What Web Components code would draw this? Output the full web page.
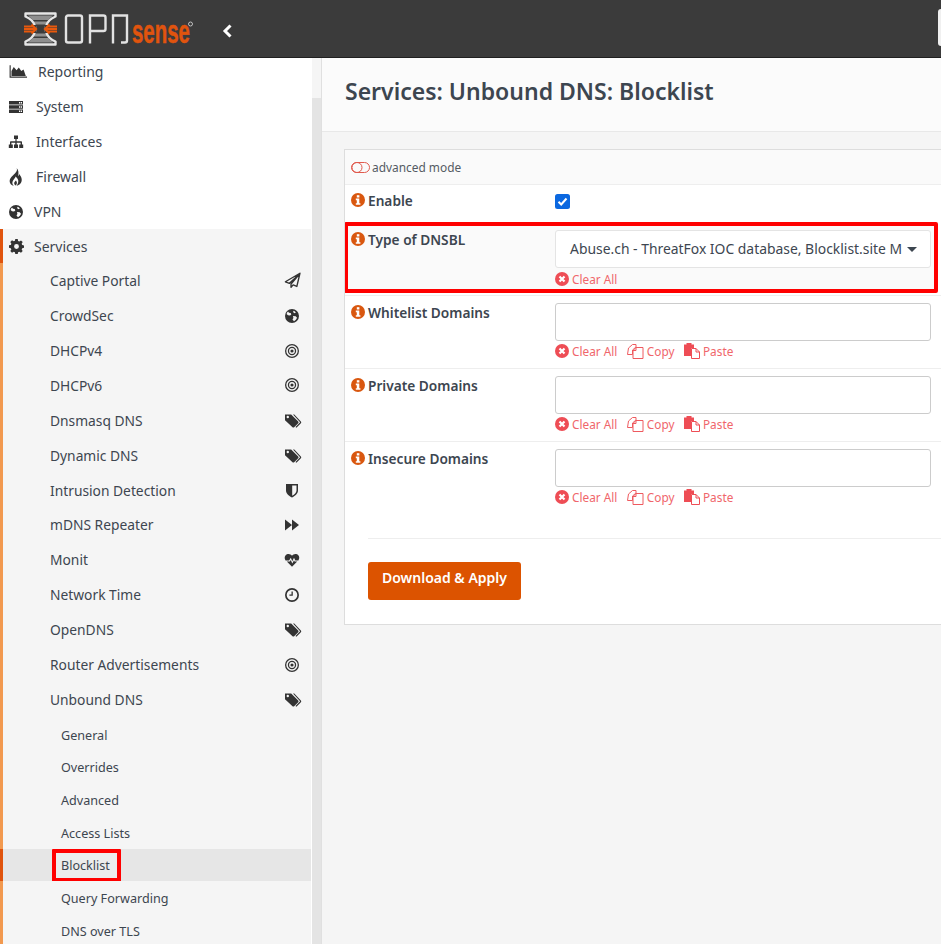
<!DOCTYPE html>
<html lang="en"><head><meta charset="utf-8"><title>OPNsense</title>
<style>
html,body{margin:0;padding:0;height:100%;overflow:hidden;background:#f5f5f5}
body{font-family:"Noto Sans","Open Sans",sans-serif;color:#3d4650;width:941px;height:944px;display:flex;flex-direction:column}
</style></head><body>
<op-header></op-header>
<op-shell>
  <op-sidebar slot="side">
    <op-nav top icon="area" size="18" gap="14">Reporting</op-nav>
    <op-nav top icon="server" gap="12">System</op-nav>
    <op-nav top icon="sitemap" gap="12">Interfaces</op-nav>
    <op-nav top icon="fire" size="18" gap="12">Firewall</op-nav>
    <op-nav top icon="globe" gap="10">VPN</op-nav>
    <op-nav top icon="cog" size="15" gap="10" open>Services</op-nav>
    <op-nav sub icon="plane" size="17">Captive Portal</op-nav>
    <op-nav sub icon="globe">CrowdSec</op-nav>
    <op-nav sub icon="bullseye">DHCPv4</op-nav>
    <op-nav sub icon="bullseye">DHCPv6</op-nav>
    <op-nav sub icon="tags" size="17">Dnsmasq DNS</op-nav>
    <op-nav sub icon="tags" size="17">Dynamic DNS</op-nav>
    <op-nav sub icon="shield">Intrusion Detection</op-nav>
    <op-nav sub icon="forward">mDNS Repeater</op-nav>
    <op-nav sub icon="heart">Monit</op-nav>
    <op-nav sub icon="clock">Network Time</op-nav>
    <op-nav sub icon="tags" size="17">OpenDNS</op-nav>
    <op-nav sub icon="bullseye">Router Advertisements</op-nav>
    <op-nav sub icon="tags" size="17">Unbound DNS</op-nav>
    <op-nav leaf firstleaf>General</op-nav>
    <op-nav leaf>Overrides</op-nav>
    <op-nav leaf>Advanced</op-nav>
    <op-nav leaf>Access Lists</op-nav>
    <op-nav leaf active>Blocklist</op-nav>
    <op-nav leaf>Query Forwarding</op-nav>
    <op-nav leaf>DNS over TLS</op-nav>
  </op-sidebar>
  <op-main slot="main">
    <op-title>Services: Unbound DNS: Blocklist</op-title>
    <op-panel>
      <op-advanced>advanced mode</op-advanced>
      <op-row label="Enable" kind="check"></op-row>
      <op-row label="Type of DNSBL" kind="select" value="Abuse.ch - ThreatFox IOC database, Blocklist.site M"></op-row>
      <op-row label="Whitelist Domains" kind="tokens" first></op-row>
      <op-row label="Private Domains" kind="tokens"></op-row>
      <op-row label="Insecure Domains" kind="tokens" last></op-row>
      <op-actions>Download &amp; Apply</op-actions>
    </op-panel>
  </op-main>
</op-shell>
<script>
const ICONS={
 area:'<path d="M2.300 2h1v10h14.500v1H2.300z"/><path d="M4 11.500V7l2-3.500 2.500 3L10.500 4l2.200 3 2-1.200 2 5.700z"/>',
 server:'<path fill-rule="evenodd" d="M1 2h14v3.400H1zM11 3v1.400h1.400V3zm2 0v1.400h1V3zM1 6.300h14v3.400H1zm10 1v1.400h1.400V7.300zm2 0v1.400h1V7.300zM1 10.600h14V14H1zm10 1V13h1.400v-1.400zm2 0V13h1v-1.400z"/>',
 sitemap:'<path d="M6 1.500h4v3.600H8.600v2.200h4.600a.8.8 0 0 1 .8.8v2.400h1.200v3.600h-4v-3.600h1.400V8.700H8.700v1.800H10v3.600H6v-3.600h1.300V8.700H3.400v1.800h1.400v3.600h-4v-3.600H2V8.100a.8.8 0 0 1 .8-.8h4.600V5.100H6z"/>',
 fire:'<path d="M8.500 0c1.200 2.600-.8 4-2.200 5.600C5 7 3 8.500 2.500 10.500c-.6 2.700 1 4.800 3.500 5.300-1.200-1.200-1.800-3-.6-4.800.8-1.200 1.800-2 2.200-3.500 1.600 1.300 2.800 3 2.400 5-.2 1.200-.7 2.300-1.500 3.200 2.600-.4 4.600-2.500 4.600-5.300 0-2.300-1.300-3.800-2.300-5.100-.1.800-.3 1.500-.9 2C10.400 4.500 10.500 2 8.500 0z"/><path d="M8 11c.5.900 1 1.600.8 2.600-.1.800-.6 1.500-1.100 2-.8-.5-1.400-1.300-1.300-2.300.1-1 .9-1.500 1.600-2.300z"/>',
 globe:'<path fill-rule="evenodd" d="M8 1a7 7 0 1 1 0 14A7 7 0 0 1 8 1zM4 3.600l1 1.200 1.700.3.600 1.300-1.300 1-2-.2-1.400-1.200A5.600 5.600 0 0 1 4 3.600zm5.700-.9L9 4l1.400 1.300 1.500-.7a5.600 5.600 0 0 0-2.200-1.900zM9 8l2.700.3 1.300 1.400c-.5 1.500-1.600 2.800-3 3.500L8.500 11.500 9.400 10z"/>',
 cog:'<path fill-rule="evenodd" d="M6.700 0h2.600l.4 2 1.300.6 1.800-1.100 1.800 1.800-1.100 1.800.6 1.300 1.900.4v2.600l-1.900.4-.6 1.300 1.100 1.800-1.800 1.800-1.800-1.100-1.300.6-.4 1.900H6.700l-.4-1.900-1.300-.6-1.800 1.100-1.800-1.800 1.100-1.800-.6-1.300L0 9.300V6.700l1.900-.4.600-1.300-1.100-1.800 1.800-1.800 1.800 1.100 1.300-.6zM8 5.400a2.600 2.600 0 1 0 0 5.200 2.600 2.600 0 0 0 0-5.200z"/>',
 plane:'<path fill="none" stroke="currentColor" stroke-width="1.300" stroke-linejoin="round" d="M15 1.200 1.300 9.200l3.800 1.500L14.600 2 6.600 11.400v3l2-2.300 3.500 1.500z"/>',
 bullseye:'<path fill-rule="evenodd" d="M8 1a7 7 0 1 1 0 14A7 7 0 0 1 8 1zm0 1.300a5.700 5.700 0 1 0 0 11.400A5.700 5.700 0 0 0 8 2.300zm0 1.500a4.200 4.200 0 1 1 0 8.400 4.200 4.200 0 0 1 0-8.400zm0 1.300a2.900 2.900 0 1 0 0 5.800 2.900 2.900 0 0 0 0-5.800zM8 6.400a1.600 1.600 0 1 1 0 3.200 1.600 1.600 0 0 1 0-3.200z"/>',
 tags:'<g transform="scale(.94)"><path fill-rule="evenodd" d="M1 2.500h6.200l7 7a1.200 1.200 0 0 1 0 1.700l-4 4a1.200 1.200 0 0 1-1.700 0l-7.500-7V2.500zm2.800 1.300a1.200 1.200 0 1 0 0 2.400 1.200 1.200 0 0 0 0-2.400z"/><path d="M9 2.500h1.300l6.600 7a1.200 1.200 0 0 1 0 1.700l-4.500 4.600-.9-.8 4.400-4.600a.3.300 0 0 0 0-.5z"/></g>',
 shield:'<path fill-rule="evenodd" d="M2 2h12v6.500c0 3.300-3.200 5.800-6 6.900-2.800-1.100-6-3.600-6-6.900zm6.200 1.500v10.200c2.300-1 4.300-3 4.300-5.200v-5z"/>',
 forward:'<path d="M1 2.500 8 8 1 13.500zM8 2.500 15 8l-7 5.500z"/>',
 heart:'<path d="M8 14.800 2.800 9.600h3l1-1.700 1.500 3.600L10 8.300l.6 1.300h2.600z"/><path d="M1.600 8.400C.2 6.500.4 3.400 3 2.300 5 1.500 6.900 2.300 8 3.800c1.100-1.500 3-2.300 5-1.500 2.600 1.100 2.800 4.200 1.400 6.100h-3.100L10 5.800 8.300 9.200 6.800 5.800 5.100 8.400z"/>',
 clock:'<path fill-rule="evenodd" d="M8 1a7 7 0 1 1 0 14A7 7 0 0 1 8 1zm0 1.700a5.300 5.300 0 1 0 0 10.600A5.300 5.300 0 0 0 8 2.700zM8.800 4.500v4.300H5.400V7.500h2.100v-3z"/>',
};
function icon(name,size=16){return `<svg width="${size}" height="${size}" viewBox="0 0 16 16" fill="currentColor" aria-hidden="true" style="flex:none;overflow:visible">${ICONS[name]||''}</svg>`}
function def(name,fn,css){customElements.define(name,class extends HTMLElement{connectedCallback(){if(this.shadowRoot)return;const r=this.attachShadow({mode:'open'});r.innerHTML=`<style>${css}</style>`+fn(this)}})}

def('op-header',()=>`
<svg class="logo" width="172" height="34" viewBox="0 0 172 34" aria-hidden="true">
 <path fill="#8f8f8f" d="M4 3.500h25L24 8H9zM9 9.500h15l-1.500 3h-12zM10.500 21.500h12l1.500 3H9zM9 26h15l5 4.500H4z"/>
 <path fill="none" stroke="#e6e6e6" stroke-width="2.400" stroke-linejoin="round" d="M1.500 1.500h30v3c-5 2-8.500 6-9.500 10v5c1 4 4.500 8 9.500 10v3h-30v-3c5-2 8.500-6 9.500-10v-5c-1-4-4.500-8-9.500-10z"/>
 <path fill="#3b3b3b" d="M0 13h12v8H0zM21 13h12v8H21z"/>
 <g fill="none" stroke="#e8590c" stroke-width="2.200">
  <path d="M0 14.500h9M0 19.500h9M0 17h12M33 14.500h-9M33 19.500h-9M33 17H21"/>
  <path d="M7.500 12.500 12 17l-4.500 4.500M25.500 12.500 21 17l4.500 4.500"/>
 </g>
 <g fill="none" stroke="#e2e2e2" stroke-width="2.400">
  <rect x="42" y="3.500" width="16" height="27" rx="2"/>
  <path d="M66 31.500V3.500h13.500a2 2 0 0 1 2 2V17a2 2 0 0 1-2 2H66"/>
  <path d="M89 31.500V3.500h14V28.500a2 2 0 0 1-2 2h-4"/>
 </g>
 <circle cx="166.500" cy="12" r="2" fill="none" stroke="#ddd" stroke-width=".8"/>
</svg><span class="sense">sense</span>
<svg class="chev" width="11" height="14" viewBox="0 0 11 14" aria-hidden="true"><path d="M8.500 1.500 3 7l5.500 5.500" fill="none" stroke="#fff" stroke-width="3"/></svg>
<i class="edge"></i>`,
`:host{display:flex;align-items:center;flex:none;height:57px;background:#3b3b3b;border-bottom:1px solid #202020;padding-left:24px;position:relative;overflow:hidden}
.logo{flex:none}
.sense{position:absolute;left:132px;top:14px;color:#e0540e;font:bold 34px/34px "Liberation Sans",sans-serif;transform:scaleX(.6);transform-origin:left;-webkit-text-stroke:.5px #e0540e}
.chev{position:absolute;left:222px;top:24px}
.edge{position:absolute;right:-6px;top:9px;width:9px;height:37px;background:#f0f0f0;border-radius:3px}`);

def('op-shell',()=>`<slot name="side"></slot><slot name="main"></slot>`,
`:host{display:flex;flex:1;min-height:0;overflow:hidden}`);

def('op-sidebar',()=>`<div class="list"><slot></slot></div><div class="track"><i></i></div>`,
`:host{display:flex;flex:none;width:321px;height:100%;overflow:hidden;background:#fff}
.list{flex:none;width:311px;margin-top:-4px;margin-right:1px;background:#fff}
.track{flex:none;width:9px;background:#f5f5f5;padding-top:40px;box-sizing:border-box}
.track i{display:block;height:100%;background:#e4e4e4}`);

def('op-nav',h=>{
 const ic=h.getAttribute('icon'),s=+h.getAttribute('size')||16;
 if(h.hasAttribute('top'))return `<span class="ic">${icon(ic,s)}</span><span class="t" style="margin-left:${(+h.getAttribute('gap')||10)}px"><slot></slot></span>`;
 if(h.hasAttribute('sub'))return `<span class="t"><slot></slot></span><span class="r">${icon(ic,s)}</span>`;
 return `<span class="t"><slot></slot></span>`;
},
`:host{display:flex;align-items:center;box-sizing:border-box;height:35px;font-size:14px;color:#3d4650;position:relative;background:#fff;white-space:nowrap}
:host([top]){padding-left:8px}
.ic{display:flex;color:#333;width:16px;justify-content:center;overflow:visible}
:host([open]){background:#f5f5f5;border-left:3px solid #e0540e;padding-left:5px;height:34.300px}
:host([sub]){background:#f5f5f5;height:34.900px;border-left:3px solid #f2994f;padding:0 11px 0 47px;justify-content:space-between;font-size:13.800px}
.r{display:flex;color:#333;width:16px;justify-content:center}
:host([leaf]){background:#f5f5f5;height:32.750px;border-left:3px solid #f2994f;padding:2px 0 0 58px;font-size:12.600px}
:host([firstleaf]){height:33.450px;padding-top:3px}
:host([active]){background:#e6e6e6;border-left-color:#e0540e;padding-top:1px}
:host([active]) .t{display:flex;align-items:center;box-sizing:border-box;height:33px;border:4px solid #f00;padding:0 7px 0 5px;margin-left:-9px;background:#ececec;border-radius:1px}`);

def('op-main',()=>`<slot></slot>`,`:host{display:block;flex:1;min-width:0;overflow:hidden;background:#f5f5f5;border-left:1px solid #e0e0e0}`);

def('op-title',()=>`<h1><slot></slot></h1>`,
`:host{display:block;height:73px;background:#fbfbfb;border-bottom:1px solid #e8e8e8;padding-left:23px}
h1{margin:0;font-size:23px;line-height:67px;font-weight:600;color:#3d4650;white-space:nowrap}`);

def('op-panel',()=>`<slot></slot>`,
`:host{display:block;margin:17px -2px 0 22px;background:#fff;border:1px solid #ddd;border-right:0;height:476px;box-sizing:border-box;overflow:hidden}`);

def('op-advanced',()=>`<svg width="19" height="11" viewBox="0 0 19 11" aria-hidden="true"><g fill="none" stroke="#e05a4e" stroke-width="1"><rect x=".5" y=".5" width="18" height="10" rx="5"/><circle cx="6" cy="5.500" r="5"/></g></svg><span><slot></slot></span>`,
`:host{display:flex;align-items:center;height:35px;padding-left:6px;gap:2px;border-bottom:1px solid #eee;font-size:11.900px;color:#555b63;background:#fafafa;box-sizing:border-box}`);

const info=`<svg width="14" height="14" viewBox="0 0 14 14" aria-hidden="true"><circle cx="7" cy="7" r="7" fill="#d9570f"/><rect x="5.800" y="2.200" width="2.600" height="2.300" fill="#fff"/><path d="M4.800 5.600h3.500v4.600h1.100v1.600H4.800v-1.600h1V7.200h-1z" fill="#fff"/></svg>`;
const xc=`<svg width="14" height="14" viewBox="0 0 14 14" aria-hidden="true"><circle cx="7" cy="7" r="7" fill="#ee4d55"/><path d="M4.500 4.500l5 5M9.500 4.500l-5 5" stroke="#fff" stroke-width="2.200"/></svg>`;
const copy=`<svg width="17" height="15" viewBox="0 0 17 15" aria-hidden="true"><g fill="#fff" stroke="#ee5a5f" stroke-width="1"><path d="M5.500 .5 1.500 4 .5 10.500h5V6L9 3V.5z"/><path d="M9 3.500h7v11H6V6.500z"/><path d="M9 3.500v3H6" fill="none"/></g></svg>`;
const paste=`<svg width="16" height="16" viewBox="0 0 16 16" aria-hidden="true"><path fill="#ee4d55" d="M0 1.500h2.500V0h5v1.500H10V5H7v8H0z"/><path d="M7.500 5.500h4.500l3.500 3.500v6.500h-8z" fill="#fff" stroke="#ee4d55" stroke-width="1"/><path d="M12 5.500V9h3.500" fill="none" stroke="#ee4d55"/></svg>`;

def('op-row',h=>{
 const k=h.getAttribute('kind');let c='';
 if(k==='check')c=`<span class="check"><svg width="15" height="15" viewBox="0 0 15 15" aria-hidden="true"><rect width="15" height="15" rx="2.500" fill="#0b68e0"/><path d="M3.500 7.800l2.700 2.700 5.300-6" fill="none" stroke="#fff" stroke-width="2"/></svg></span>`;
 if(k==='select')c=`<div class="field sel"><span>${h.getAttribute('value')}</span><b></b></div><div class="tools"><a>${xc}<span>Clear All</span></a></div>`;
 if(k==='tokens')c=`<div class="field"></div><div class="tools"><a>${xc}<span>Clear All</span></a><a class="c">${copy}<span>Copy</span></a><a class="c">${paste}<span>Paste</span></a></div>`;
 return `<div class="lab">${info}<span>${h.getAttribute('label')}</span></div><div class="ctl">${c}</div>`;
},
`:host{display:flex;box-sizing:border-box;height:73px;border-bottom:1px solid #eee;background:#fff;position:relative}
:host([first]){height:74px;border-top:1px solid #eee}
:host([last]){border-bottom:0}
:host([kind=check]){height:37px;border-bottom:0}
:host([kind=select]){height:71px;width:594px;margin:0 0 2px -1px;background:#fafafa;border:4px solid #f00;border-radius:2px}
.lab{flex:none;width:210px;box-sizing:border-box;padding:7px 0 0 6px;display:flex;align-items:flex-start;gap:3px;font-size:13.700px;font-weight:600;color:#3d4650;line-height:20px;white-space:nowrap}
:host([kind=check]) .lab{padding-top:6px}
.lab svg{flex:none;margin-top:2px}
:host([kind=select]) .lab{width:207px;padding:4px 0 0 3px}
.ctl{flex:none;width:376px;padding-top:7px;box-sizing:border-box}
:host([kind=check]) .ctl{padding-top:9px}
:host([kind=select]) .ctl{padding-top:4px}
.check{display:block;height:15px;line-height:0}
.field{height:38px;box-sizing:border-box;background:#fff;border:1px solid #ccc;border-radius:3px}
.sel{border-color:#e4e4e4;display:flex;align-items:center;justify-content:space-between;padding:0 13px 2px 14px;font-size:13.900px;color:#3d4650;white-space:nowrap}
.sel b{flex:none;width:0;height:0;border:5px solid transparent;border-top-color:#3d4650;border-bottom:0;margin-top:2px}
.tools{display:flex;gap:9.500px;margin-top:2px;height:16px;font-size:11.800px;line-height:16px;color:#f0666b;white-space:nowrap}
:host([kind=select]) .tools{margin-top:3px}
a{display:flex;align-items:center;gap:3px}`);

def('op-actions',()=>`<div class="inner"><button><slot></slot></button></div>`,
`:host{display:block;padding:23px 0 0 23px}
.inner{border-top:1px solid #eee;padding-top:23px}
button{all:unset;display:block;width:153px;height:38px;padding-bottom:6px;text-align:center;box-sizing:border-box;background:#dc5300;color:#fff;font:600 14px/32px "Noto Sans",sans-serif;border-radius:3px}`);
</script>
</body></html>
